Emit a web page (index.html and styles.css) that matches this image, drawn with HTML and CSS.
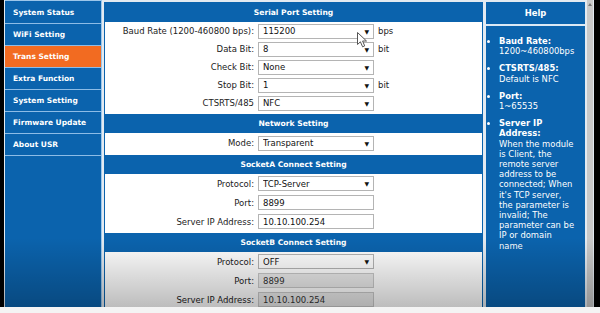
FILE: index.html
```html
<!DOCTYPE html>
<html lang="en">
<head>
    <meta name="viewport" content="width=device-width, initial-scale=1">
    <title>Trans Setting</title>
    <link rel="stylesheet" href="styles.css">
</head>
<body>
    <div class="screen">
        <div class="edge"></div>
        <ul class="menu">
            <li>System Status</li>
            <li>WiFi Setting</li>
            <li class="active">Trans Setting</li>
            <li>Extra Function</li>
            <li>System Setting</li>
            <li>Firmware Update</li>
            <li>About USR</li>
        </ul>
        <form class="main">
            <div class="head first">Serial Port Setting</div>
            <div class="row">
                <label>Baud Rate (1200-460800 bps):</label>
                <span class="sel"><select><option>115200</option></select></span>
                <span class="unit">bps</span>
            </div>
            <div class="row">
                <label>Data Bit:</label>
                <span class="sel"><select><option>8</option></select></span>
                <span class="unit">bit</span>
            </div>
            <div class="row">
                <label>Check Bit:</label>
                <span class="sel"><select><option>None</option></select></span>
            </div>
            <div class="row">
                <label>Stop Bit:</label>
                <span class="sel"><select><option>1</option></select></span>
                <span class="unit">bit</span>
            </div>
            <div class="row">
                <label>CTSRTS/485</label>
                <span class="sel"><select><option>NFC</option></select></span>
            </div>

            <div class="head">Network Setting</div>
            <div class="row tall">
                <label>Mode:</label>
                <span class="sel"><select><option>Transparent</option></select></span>
            </div>

            <div class="head">SocketA Connect Setting</div>
            <div class="row mid">
                <label>Protocol:</label>
                <span class="sel"><select><option>TCP-Server</option></select></span>
            </div>
            <div class="row mid">
                <label>Port:</label>
                <input type="text" value="8899">
            </div>
            <div class="row mid">
                <label>Server IP Address:</label>
                <input type="text" value="10.10.100.254">
            </div>

            <div class="head">SocketB Connect Setting</div>
            <div class="row mid">
                <label>Protocol:</label>
                <span class="sel"><select><option>OFF</option></select></span>
            </div>
            <div class="row mid">
                <label>Port:</label>
                <input type="text" value="8899" disabled>
            </div>
            <div class="row mid">
                <label>Server IP Address:</label>
                <input type="text" value="10.10.100.254" disabled>
            </div>
        </form>
        <div class="help">
            <div class="help-head">Help</div>
            <ul>
                <li><b>Baud Rate:</b><br>1200~460800bps</li>
                <li><b>CTSRTS/485:</b><br>Default is NFC</li>
                <li><b>Port:</b><br>1~65535</li>
                <li><b>Server IP Address:</b><br>When the module is Client, the remote server address to be connected; When it's TCP server, the parameter is invalid; The parameter can be IP or domain name</li>
            </ul>
        </div>
        <div class="scroll"><span class="up"></span></div>
        <div class="edge right"></div>

        <div class="shade"></div>
        <svg class="cursor" width="11" height="16" viewBox="0 0 11 16">
            <path d="M0.5 0.5 L0.5 12.5 L3.4 9.8 L5.6 14.8 L7.7 13.9 L5.6 9 L9.5 9 Z" fill="#fff" stroke="#555" stroke-width="1"/>
        </svg>
    </div>
</body>
</html>
```

FILE: styles.css
```css
html, body {
    margin: 0;
    padding: 0;
}
body {
    background-color: #f4f4f4;
    font-family: "DejaVu Sans", Verdana, sans-serif;
    height: 313px;
    overflow: hidden;
}
.screen {
    position: relative;
    display: flex;
    height: 307px;
    background-color: #e3eaf1;
}
.edge {
    width: 4px;
    background-color: #000;
}
.edge.right {
    flex: 1;
    margin-left: 1px;
}

/* left menu */
.menu {
    list-style: none;
    margin: 0 0 0 1px;
    padding: 1px 0 0;
    width: 96px;
    background-color: #0b63ad;
    border-top: 1px solid #9cc6ea;
    border-right: 1px solid #9cc6ea;
}
.menu li {
    height: 21px;
    line-height: 21px;
    padding-left: 8px;
    border-bottom: 1px solid #8dbce6;
    color: #fff;
    font-weight: bold;
    font-size: 7.5px;
}
.menu li.active {
    background-color: #f26b21;
}

/* settings */
.main {
    margin: 2px 0 0 2px;
    width: 377px;
    background-color: #fff;
    border: 1px solid #0b63ad;
    border-bottom: none;
    font-size: 8.5px;
    color: #222;
}
.head {
    height: 19px;
    line-height: 19px;
    margin-top: 2px;
    background-color: #0b63ad;
    color: #fff;
    font-weight: bold;
    font-size: 7.6px;
    text-align: center;
}
.head.first {
    margin-top: 0;
}
.row {
    display: flex;
    align-items: center;
    height: 18px;
}
.row.tall {
    height: 20px;
}
.row.mid {
    height: 19px;
}
.row label {
    width: 149px;
    margin-right: 4px;
    text-align: right;
}
.sel {
    position: relative;
    display: block;
    width: 116px;
    height: 15px;
}
.sel::after {
    content: "\25BC";
    position: absolute;
    right: 5px;
    top: 4px;
    font-size: 6px;
    color: #111;
}
.sel select, .row input {
    appearance: none;
    box-sizing: border-box;
    width: 116px;
    height: 15px;
    margin: 0;
    padding: 0 0 0 4px;
    border: 1px solid #b4b4b4;
    border-radius: 0;
    background-color: #fff;
    font: inherit;
    color: #111;
}
.row input:disabled {
    background-color: #ebebeb;
    border-color: #c8c8c8;
    color: #333;
}
.unit {
    margin-left: 4px;
}

/* help */
.help {
    margin: 2px 0 0 3px;
    width: 99px;
    background-color: #0b63ad;
    color: #fff;
    font-size: 8.4px;
}
.help-head {
    height: 22px;
    line-height: 22px;
    border-bottom: 2px solid #dce9f5;
    text-align: center;
    font-weight: bold;
}
.help ul {
    margin: 10px 0 0;
    padding: 0 8px 0 13px;
    line-height: 10.2px;
}
.help li {
    margin-bottom: 7px;
}

.scroll {
    width: 6px;
    margin-left: 2px;
    background-color: #c9c9c9;
}
.scroll .up {
    display: block;
    margin: 3px auto 0;
    width: 0;
    height: 0;
    border-left: 2px solid transparent;
    border-right: 2px solid transparent;
    border-bottom: 3px solid #777;
}

/* video shading at the bottom of the shot */
.shade {
    position: absolute;
    left: 0;
    right: 0;
    top: 238px;
    bottom: 0;
    background: linear-gradient(to bottom, rgba(0, 0, 0, 0), rgba(0, 0, 0, 0.26));
    pointer-events: none;
}
.cursor {
    position: absolute;
    left: 357px;
    top: 32px;
}
```
